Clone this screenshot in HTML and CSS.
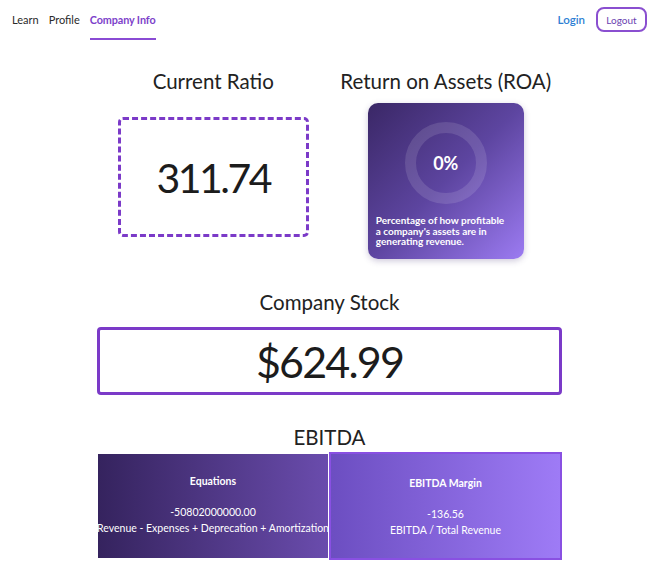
FILE: index.html
```html
<!DOCTYPE html>
<html lang="en">
<head>
<meta charset="utf-8">
<title>Company Info</title>
<link rel="stylesheet" href="styles.css">
</head>
<body>
<nav class="nav">
  <div class="nav-left">
    <a class="nav-link">Learn</a>
    <a class="nav-link">Profile</a>
    <a class="nav-link active">Company Info</a>
  </div>
  <div class="nav-right">
    <a class="login">Login</a>
    <button class="logout">Logout</button>
  </div>
</nav>
<main class="main">
  <section class="top-row">
    <div class="col">
      <h2 class="heading">Current Ratio</h2>
      <div class="ratio-box">311.74</div>
    </div>
    <div class="col">
      <h2 class="heading">Return on Assets (ROA)</h2>
      <div class="roa-card">
        <div class="ring"><span class="ring-value">0%</span></div>
        <p class="roa-desc">Percentage of how profitable<br>a company's assets are in<br>generating revenue.</p>
      </div>
    </div>
  </section>
  <section class="stock">
    <h2 class="heading">Company Stock</h2>
    <div class="stock-box">$624.99</div>
  </section>
  <section class="ebitda">
    <h2 class="heading">EBITDA</h2>
    <div class="ebitda-grid">
      <div class="eb-card eb-left">
        <div class="eb-title">Equations</div>
        <div class="eb-value">-50802000000.00</div>
        <div class="eb-formula">Revenue - Expenses + Deprecation + Amortization</div>
      </div>
      <div class="eb-card eb-right">
        <div class="eb-title">EBITDA Margin</div>
        <div class="eb-value">-136.56</div>
        <div class="eb-formula">EBITDA / Total Revenue</div>
      </div>
    </div>
  </section>
</main>
</body>
</html>
```
FILE: styles.css
```css
* { box-sizing: border-box; }
html, body { margin: 0; padding: 0; background: #fff; }
body {
  font-family: "Lato", "Noto Sans", "DejaVu Sans", sans-serif;
  color: #1f1f1f;
  width: 668px;
  overflow: hidden;
}
.nav {
  display: flex;
  justify-content: space-between;
  align-items: flex-start;
  height: 40px;
  padding: 0 21px 0 12px;
}
.nav-left { display: flex; gap: 10px; }
.nav-link {
  font-size: 11px;
  color: #2a2a2a;
  line-height: 39px;
  height: 40px;
  border-bottom: 2px solid transparent;
}
.nav-link.active {
  color: #7d3fca;
  font-weight: 700;
  font-size: 10.8px;
  letter-spacing: -0.1px;
  border-bottom-color: #8a4bd4;
}
.nav-right { display: flex; align-items: center; gap: 11px; padding-top: 7px; }
.login { color: #2f7fd4; font-size: 11.5px; font-weight: 600; }
.logout {
  font-family: inherit;
  width: 51px;
  height: 25px;
  border: 2px solid #8a4fd0;
  border-radius: 8px;
  background: #fff;
  color: #6a3fb0;
  font-size: 10px;
  padding: 0;
}
.main {
  width: 465px;
  margin-left: 97px;
  display: flex;
  flex-direction: column;
}
.heading {
  margin: 0;
  font-weight: 400;
  font-size: 20.5px;
  color: #222;
  text-align: center;
  line-height: 26px;
}
.top-row { display: grid; grid-template-columns: 1fr 1fr; margin-top: 28px; }
.col { display: flex; flex-direction: column; align-items: center; }
.ratio-box {
  margin-top: 23px;
  width: 191px;
  height: 120px;
  border: 3px dashed #7b3ac8;
  border-radius: 5px;
  display: flex;
  align-items: center;
  justify-content: center;
  font-size: 41px;
  letter-spacing: -2.5px;
  color: #1c1c1c;
}
.roa-card {
  margin-top: 9px;
  width: 156px;
  height: 156px;
  border-radius: 10px;
  background: linear-gradient(135deg, #3a2766 0%, #5d45a0 50%, #9c7bf2 100%);
  box-shadow: 0 2px 6px rgba(60, 40, 110, 0.25);
  display: flex;
  flex-direction: column;
  align-items: center;
  padding: 19px 8px 0;
}
.ring {
  width: 82px;
  height: 82px;
  border-radius: 50%;
  border: 11px solid rgba(255, 255, 255, 0.12);
  display: flex;
  align-items: center;
  justify-content: center;
}
.ring-value { color: #fff; font-weight: 700; font-size: 18px; }
.roa-desc {
  margin: 11px 0 0;
  color: #fff;
  font-size: 10px;
  font-weight: 700;
  line-height: 10.5px;
  align-self: stretch;
  white-space: nowrap;
}
.stock { margin-top: 30px; display: flex; flex-direction: column; }
.stock-box {
  margin-top: 12px;
  height: 68px;
  border: 3px solid #7b3ac8;
  border-radius: 4px;
  display: flex;
  align-items: center;
  justify-content: center;
  font-size: 43px;
  letter-spacing: -1.8px;
  color: #1c1c1c;
}
.ebitda { margin-top: 29px; display: flex; flex-direction: column; }
.ebitda-grid {
  margin-top: 2px;
  display: grid;
  grid-template-columns: 231px 234px;
  align-items: center;
}
.eb-card {
  color: #fff;
  text-align: center;
  display: flex;
  flex-direction: column;
  align-items: center;
  font-size: 10.5px;
  white-space: nowrap;
}
.eb-left {
  margin-left: 1px;
  height: 104px;
  background: linear-gradient(90deg, #35235e 0%, #6a4cad 100%);
  padding-top: 21px;
}
.eb-right {
  height: 108px;
  margin-left: 1px;
  border: 2px solid #8950e2;
  background: linear-gradient(90deg, #6c4ec1 0%, #9e7bf6 100%);
  padding-top: 23px;
}
.eb-title { font-weight: 700; font-size: 10.5px; }
.eb-value { margin-top: 19px; }
.eb-formula { margin-top: 4px; }
```
